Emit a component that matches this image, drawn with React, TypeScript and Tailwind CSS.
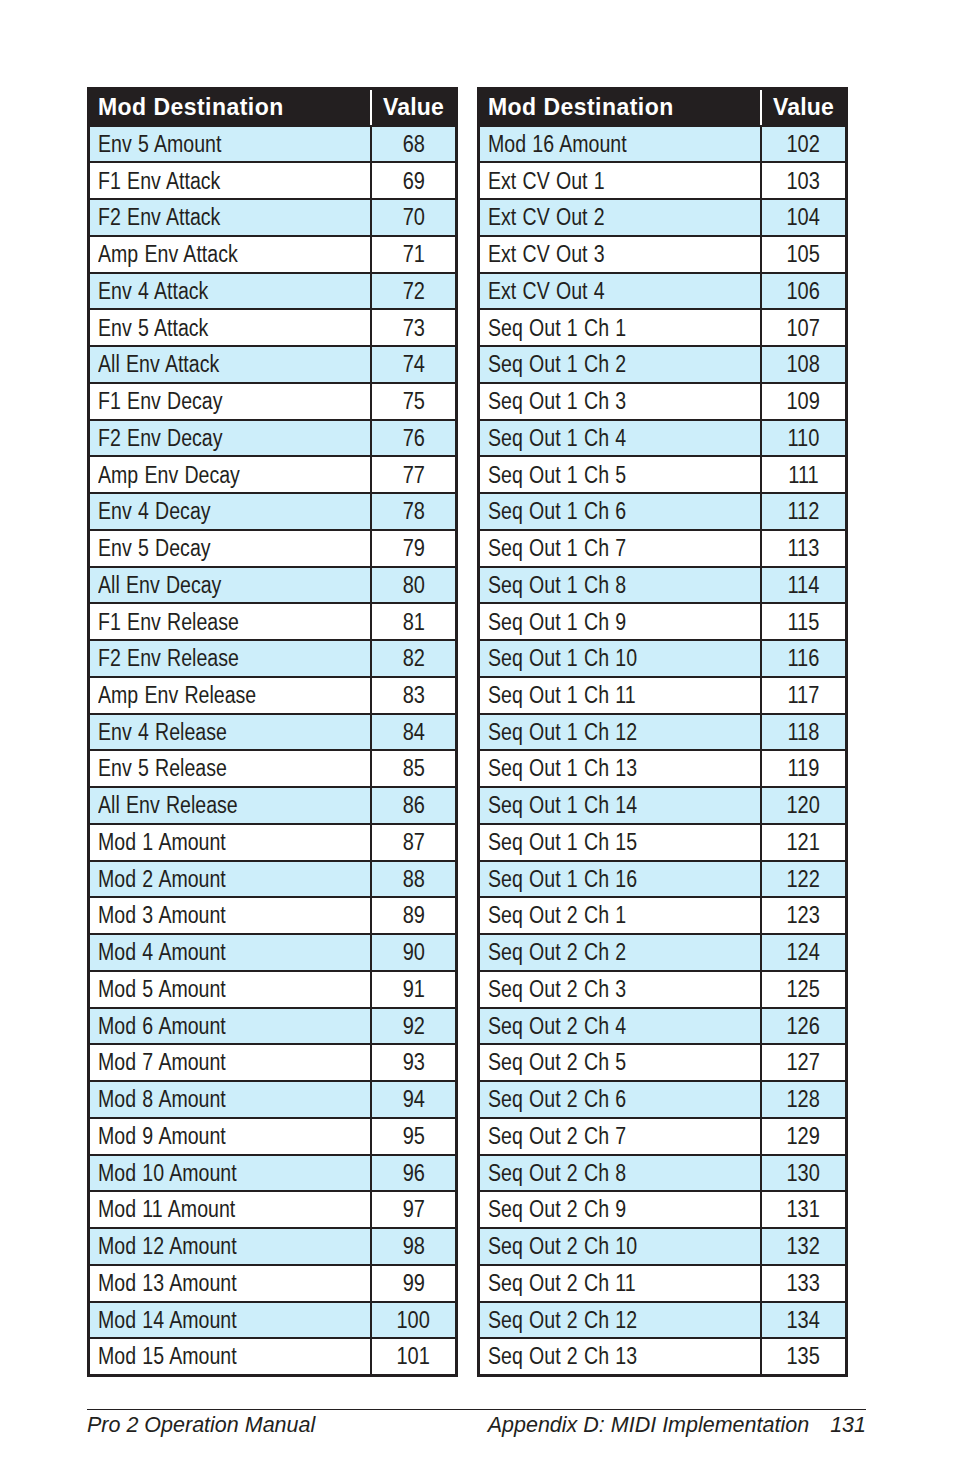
import React from "react";

const left: [string, number][] = [
  ["Env 5 Amount", 68],
  ["F1 Env Attack", 69],
  ["F2 Env Attack", 70],
  ["Amp Env Attack", 71],
  ["Env 4 Attack", 72],
  ["Env 5 Attack", 73],
  ["All Env Attack", 74],
  ["F1 Env Decay", 75],
  ["F2 Env Decay", 76],
  ["Amp Env Decay", 77],
  ["Env 4 Decay", 78],
  ["Env 5 Decay", 79],
  ["All Env Decay", 80],
  ["F1 Env Release", 81],
  ["F2 Env Release", 82],
  ["Amp Env Release", 83],
  ["Env 4 Release", 84],
  ["Env 5 Release", 85],
  ["All Env Release", 86],
  ...Array.from({ length: 15 }, (_, i) => [`Mod ${i + 1} Amount`, 87 + i] as [string, number]),
];

const right: [string, number][] = [
  ["Mod 16 Amount", 102],
  ...Array.from({ length: 4 }, (_, i) => [`Ext CV Out ${i + 1}`, 103 + i] as [string, number]),
  ...Array.from({ length: 16 }, (_, i) => [`Seq Out 1 Ch ${i + 1}`, 107 + i] as [string, number]),
  ...Array.from({ length: 13 }, (_, i) => [`Seq Out 2 Ch ${i + 1}`, 123 + i] as [string, number]),
];

function Table({ rows }: { rows: [string, number][] }) {
  return (
    <div className="w-[371px] h-[1290px] border-[3px] border-[#231f20] bg-[#231f20] grid grid-cols-[280px_83px] grid-rows-[repeat(35,minmax(0,1fr))] gap-[2px] font-['Liberation_Sans',Arial,sans-serif]">
      <div className="bg-[#231f20] text-white font-bold text-[23px] tracking-[0.45px] flex items-center pl-[8px]">
        Mod Destination
      </div>
      <div className="bg-[#231f20] text-white font-bold text-[23px] tracking-[0.2px] flex items-center justify-center shadow-[-2px_0_0_#ffffff]">
        Value
      </div>
      {rows.map(([name, val], i) => {
        const bg = i % 2 === 0 ? "bg-[#cdeefa]" : "bg-white";
        return (
          <React.Fragment key={name}>
            <div className={`${bg} flex items-center pl-[8px] text-[23px] text-[#231f20] whitespace-nowrap`}>
              <span className="inline-block origin-left scale-x-[0.85] [word-spacing:1px]">{name}</span>
            </div>
            <div className={`${bg} flex items-center justify-center text-[23px] text-[#231f20]`}>
              <span className="inline-block origin-center scale-x-[0.87]">{val}</span>
            </div>
          </React.Fragment>
        );
      })}
    </div>
  );
}

export default function App() {
  return (
    <div className="w-[954px] h-[1475px] bg-white pt-[87px] pl-[87px]">
      <div className="flex gap-[19px]">
        <Table rows={left} />
        <Table rows={right} />
      </div>
      <div className="w-[779px] h-[1px] bg-[#231f20] mt-[32px]" />
      <div className="w-[779px] flex justify-between italic text-[21.5px] text-[#231f20] leading-[26px] mt-[2px] font-['Liberation_Sans',Arial,sans-serif]">
        <span>Pro 2 Operation Manual</span>
        <span>
          Appendix D: MIDI Implementation<span className="inline-block w-[21px]" />131
        </span>
      </div>
    </div>
  );
}
